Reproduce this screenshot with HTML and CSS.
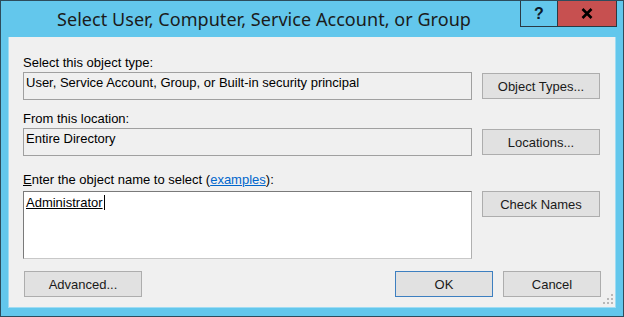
FILE: index.html
```html
<!DOCTYPE html>
<html>
<head>
<meta charset="utf-8">
<link rel="stylesheet" href="styles.css">
</head>
<body>
<div class="window">
  <div class="titlebar">
    <div class="title">Select User, Computer, Service Account, or Group</div>
    <div class="caption-buttons">
      <div class="cbtn help">?</div>
      <div class="cbtn close">
        <svg width="12" height="11" viewBox="0 0 12 11"><path d="M1.5 1 L10.5 10 M10.5 1 L1.5 10" stroke="#000" stroke-width="2.6" fill="none"/></svg>
      </div>
    </div>
  </div>
  <div class="client">
    <div class="label">Select this object type:</div>
    <div class="row">
      <div class="field">User, Service Account, Group, or Built-in security principal</div>
      <div class="btn">Object Types...</div>
    </div>
    <div class="label gap-top">From this location:</div>
    <div class="row">
      <div class="field">Entire Directory</div>
      <div class="btn">Locations...</div>
    </div>
    <div class="label gap-top2"><u>E</u>nter the object name to select (<span class="link">examples</span>):</div>
    <div class="row top">
      <div class="textarea"><span class="name">Administrator</span><span class="caret"></span></div>
      <div class="btn">Check Names</div>
    </div>
    <div class="footer">
      <div class="btn">Advanced...</div>
      <div class="footer-right">
        <div class="btn small default">OK</div>
        <div class="btn small">Cancel</div>
      </div>
    </div>
    <svg class="grip" width="10" height="10" viewBox="0 0 10 10">
      <rect x="8" y="0" width="2" height="2" fill="#b8b8b8"/>
      <rect x="4" y="4" width="2" height="2" fill="#b8b8b8"/>
      <rect x="8" y="4" width="2" height="2" fill="#b8b8b8"/>
      <rect x="0" y="8" width="2" height="2" fill="#b8b8b8"/>
      <rect x="4" y="8" width="2" height="2" fill="#b8b8b8"/>
      <rect x="8" y="8" width="2" height="2" fill="#b8b8b8"/>
    </svg>
  </div>
</div>
</body>
</html>
```
FILE: styles.css
```css
html, body {
  margin: 0;
  padding: 0;
  background: #ffffff;
}
.window {
  box-sizing: border-box;
  width: 624px;
  height: 317px;
  background: #63c7ec;
  border: 1px solid #2d4c5c;
  display: flex;
  flex-direction: column;
  padding: 0 7px 8px 7px;
}
.titlebar {
  height: 36px;
  display: flex;
  align-items: flex-start;
}
.title {
  flex: 1;
  text-align: center;
  font-family: "Noto Sans", "DejaVu Sans", sans-serif;
  font-size: 18px;
  line-height: 36px;
  color: #1b1b1b;
  letter-spacing: 0.05px;
}
.caption-buttons {
  display: flex;
  margin-right: -1px;
}
.cbtn {
  box-sizing: border-box;
  height: 26px;
  border: 1px solid #2a3a44;
  border-top: none;
  display: flex;
  align-items: center;
  justify-content: center;
}
.help {
  width: 37px;
  background: #63c7ec;
  border-right: none;
  font-family: "Liberation Sans", Arial, sans-serif;
  font-weight: bold;
  font-size: 16px;
  color: #0c1a2a;
}
.close {
  width: 60px;
  background: #c75050;
}
.client {
  position: relative;
  flex: 1;
  background: #f0f0f0;
  border: 1px solid #9fdcf3;
  border-top: none;
  padding: 18px 14px 0 14px;
  font-family: "Liberation Sans", Arial, sans-serif;
  font-size: 13px;
  line-height: 15px;
  color: #000;
  display: flex;
  flex-direction: column;
}
.label {
  height: 15px;
  margin-bottom: 2px;
  white-space: nowrap;
}
.gap-top { margin-top: 11px; }
.gap-top2 { margin-top: 16px; margin-bottom: 4px; }
.link {
  color: #0066cc;
  text-decoration: underline;
}
.row {
  display: flex;
  align-items: center;
  gap: 10px;
}
.row.top { align-items: flex-start; }
.field {
  box-sizing: border-box;
  width: 449px;
  height: 28px;
  border: 1px solid #a0a0a0;
  background: #f0f0f0;
  padding: 2px 2px;
  white-space: nowrap;
  overflow: hidden;
}
.textarea {
  box-sizing: border-box;
  width: 449px;
  height: 68px;
  border: 1px solid #7a7a7a;
  border-bottom-color: #c8c8c8;
  border-right-color: #b0b0b0;
  background: #ffffff;
  padding: 3px 2px;
  display: flex;
  align-items: flex-start;
}
.name {
  text-decoration: underline;
}
.caret {
  width: 1px;
  height: 15px;
  background: #000;
  margin-left: 1px;
}
.btn {
  box-sizing: border-box;
  width: 118px;
  height: 26px;
  background: #e1e1e1;
  border: 1px solid #adadad;
  display: flex;
  align-items: center;
  justify-content: center;
  white-space: nowrap;
  color: #1a1a1a;
}
.btn.small { width: 98px; }
.btn.default { border-color: #3d7fc0; }
.footer {
  margin-top: 12px;
  display: flex;
  justify-content: space-between;
  padding-left: 1px;
}
.footer-right {
  display: flex;
  gap: 10px;
}
.grip {
  position: absolute;
  right: 2px;
  bottom: 3px;
}
```
